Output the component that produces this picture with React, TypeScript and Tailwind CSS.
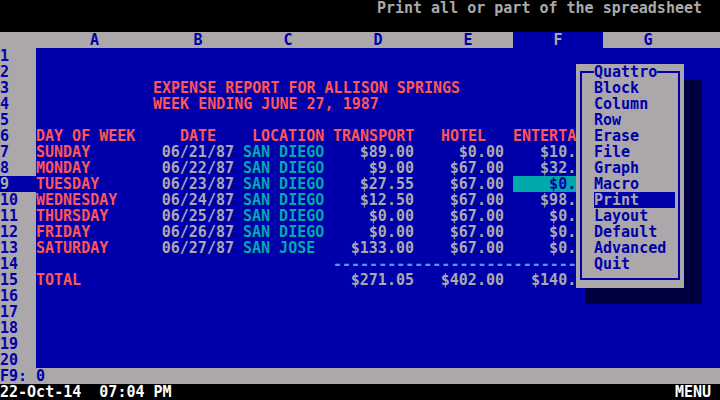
import React from 'react'

const BLUE = 'text-[#0000aa]'

const data = [
  ['SUNDAY', '06/21/87', 'SAN DIEGO', '$89.00', '$0.00', '$10.00'],
  ['MONDAY', '06/22/87', 'SAN DIEGO', '$9.00', '$67.00', '$32.00'],
  ['TUESDAY', '06/23/87', 'SAN DIEGO', '$27.55', '$67.00', '$0.00'],
  ['WEDNESDAY', '06/24/87', 'SAN DIEGO', '$12.50', '$67.00', '$98.00'],
  ['THURSDAY', '06/25/87', 'SAN DIEGO', '$0.00', '$67.00', '$0.00'],
  ['FRIDAY', '06/26/87', 'SAN DIEGO', '$0.00', '$67.00', '$0.00'],
  ['SATURDAY', '06/27/87', 'SAN JOSE', '$133.00', '$67.00', '$0.00'],
]

const menuItems = ['Block', 'Column', 'Row', 'Erase', 'File', 'Graph', 'Macro', 'Print', 'Layout', 'Default', 'Advanced', 'Quit']

const Num = ({ children }: { children?: React.ReactNode }) => (
  <div className="w-[90px] shrink-0 text-right pr-[9px] whitespace-pre text-[#aaaaaa]">{children}</div>
)

// column F runs under the menu: only its first 7 chars are on screen
const ColF = ({ value, hl }: { value: string; hl?: boolean }) => (
  <div className={`w-[63px] shrink-0 whitespace-pre ${hl ? 'bg-[#00aaaa] text-[#0000aa]' : 'text-[#aaaaaa]'}`}>
    {value.padStart(9).slice(0, 7)}
  </div>
)

const SheetRow = ({ n, children }: { n: number; children?: React.ReactNode }) => (
  <div className="flex h-4">
    <div className={`w-[36px] shrink-0 ${n === 9 ? 'bg-[#0000aa] text-[#aaaaaa]' : 'bg-[#aba7ab] text-[#0000aa]'}`}>{n}</div>
    <div className="flex flex-1 bg-[#0000aa]">{children}</div>
  </div>
)

export default function App() {
  return (
    <div
      className="relative w-[720px] h-[400px] overflow-hidden bg-black text-[15px] leading-4 font-bold"
      style={{ fontFamily: '"DejaVu Sans Mono", "Liberation Mono", monospace' }}
    >
      {/* message line */}
      <div className="h-4 flex justify-end pr-[18px] text-[#aaaaaa] whitespace-pre">Print all or part of the spreadsheet</div>
      <div className="h-4" />

      {/* column header */}
      <div className="flex h-4 bg-[#aba7ab] text-[#0000aa]">
        <div className="w-[36px] shrink-0" />
        <div className="w-[117px] shrink-0 text-center">A</div>
        {['B', 'C', 'D', 'E', 'F', 'G'].map((c) => (
          <div key={c} className={`w-[90px] shrink-0 text-center ${c === 'F' ? 'bg-[#0000aa] text-[#aaaaaa]' : ''}`}>
            {c}
          </div>
        ))}
      </div>

      {/* sheet */}
      <SheetRow n={1} />
      <SheetRow n={2} />
      <SheetRow n={3}>
        <div className="w-[117px] shrink-0" />
        <div className="text-[#ff5555] whitespace-pre">EXPENSE REPORT FOR ALLISON SPRINGS</div>
      </SheetRow>
      <SheetRow n={4}>
        <div className="w-[117px] shrink-0" />
        <div className="text-[#ff5555] whitespace-pre">WEEK ENDING JUNE 27, 1987</div>
      </SheetRow>
      <SheetRow n={5} />
      <SheetRow n={6}>
        <div className="flex text-[#ff5555] whitespace-pre">
          <div className="w-[117px] shrink-0">DAY OF WEEK</div>
          <div className="w-[90px] shrink-0 pl-[27px]">DATE</div>
          <div className="w-[90px] shrink-0 pl-[9px]">LOCATION</div>
          <div className="w-[90px] shrink-0">TRANSPORT</div>
          <div className="w-[90px] shrink-0 pl-[18px]">HOTEL</div>
          <div className="w-[63px] shrink-0">ENTERTA</div>
        </div>
      </SheetRow>
      {data.map((d, i) => (
        <SheetRow key={i} n={7 + i}>
          <div className="w-[117px] shrink-0 text-[#ff5555]">{d[0]}</div>
          <Num>{d[1]}</Num>
          <div className="w-[90px] shrink-0 text-[#00aaaa] whitespace-pre">{d[2]}</div>
          <Num>{d[3]}</Num>
          <Num>{d[4]}</Num>
          <ColF value={d[5]} hl={i === 2} />
        </SheetRow>
      ))}
      <SheetRow n={14}>
        <div className="w-[117px] shrink-0" />
        <div className="w-[90px] shrink-0" />
        <div className="w-[90px] shrink-0" />
        <div className="w-[243px] shrink-0 text-[#3aa6e6] whitespace-pre">{'-'.repeat(27)}</div>
      </SheetRow>
      <SheetRow n={15}>
        <div className="w-[117px] shrink-0 text-[#ff5555]">TOTAL</div>
        <div className="w-[90px] shrink-0" />
        <div className="w-[90px] shrink-0" />
        <Num>$271.05</Num>
        <Num>$402.00</Num>
        <ColF value="$140.00" />
      </SheetRow>
      {[16, 17, 18, 19, 20].map((n) => (
        <SheetRow key={n} n={n} />
      ))}

      {/* input line */}
      <div className={`h-4 bg-[#aba7ab] ${BLUE} whitespace-pre`}>F9: 0</div>

      {/* status line */}
      <div className="h-4 flex justify-between pr-[9px] text-white whitespace-pre">
        <span>22-Oct-14  07:04 PM</span>
        <span>MENU</span>
      </div>

      {/* menu shadow */}
      <div className="absolute left-[585px] top-[80px] w-[117px] h-[224px] bg-[#000040]" />

      {/* menu */}
      <div className={`absolute left-[576px] top-[64px] w-[108px] h-[224px] bg-[#aba7ab] ${BLUE}`}>
        <div className="absolute left-[4px] top-[7px] right-[4px] bottom-[8px] border-2 border-[#0000aa]" />
        <div className="absolute left-[18px] top-0 bg-[#aba7ab] h-4">Quattro</div>
        <div className="absolute left-[18px] top-4 w-[81px] flex flex-col">
          {menuItems.map((m) => (
            <div key={m} className={`h-4 ${m === 'Print' ? 'bg-[#0000aa] text-[#aba7ab]' : 'bg-[#aba7ab]'}`}>
              {m}
            </div>
          ))}
        </div>
      </div>
    </div>
  )
}
